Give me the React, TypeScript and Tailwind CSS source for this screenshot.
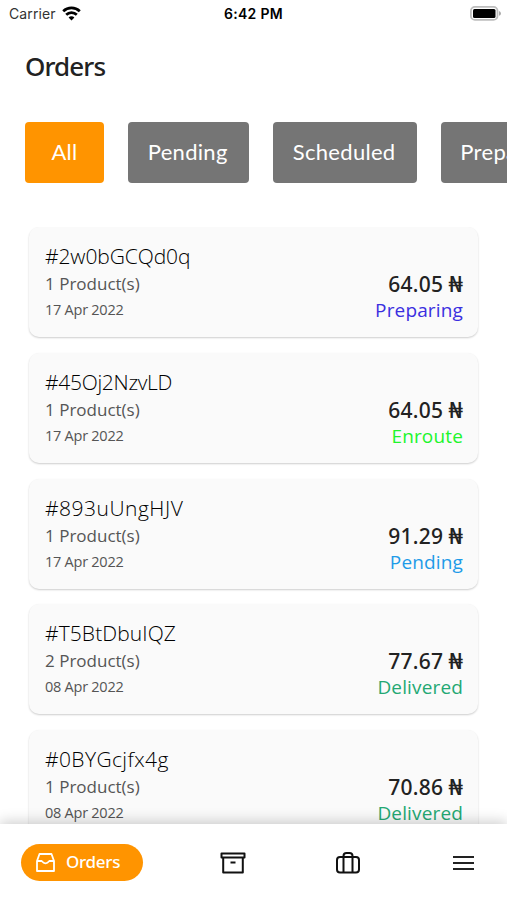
import { useState } from "react";

const filters = [
  { name: "All", width: "w-[79px]" },
  { name: "Pending", width: "w-[121.4px]" },
  { name: "Scheduled", width: "w-[143.5px]" },
  { name: "Preparing", width: "w-[136px]" },
];

const orders = [
  { id: "2w0bGCQd0q", tracking: "tracking-[-0.1px]", products: 1, date: "17 Apr 2022", total: "64.05", status: "Preparing", color: "text-[#3a2fe0]" },
  { id: "45Oj2NzvLD", tracking: "tracking-[-0.3px]", products: 1, date: "17 Apr 2022", total: "64.05", status: "Enroute", color: "text-[#20f52c]" },
  { id: "893uUngHJV", tracking: "tracking-[0.5px]", products: 1, date: "17 Apr 2022", total: "91.29", status: "Pending", color: "text-[#1e9be8]" },
  { id: "T5BtDbuIQZ", tracking: "tracking-[0.1px]", products: 2, date: "08 Apr 2022", total: "77.67", status: "Delivered", color: "text-[#23a873]" },
  { id: "0BYGcjfx4g", tracking: "tracking-[0.4px]", products: 1, date: "08 Apr 2022", total: "70.86", status: "Delivered", color: "text-[#23a873]" },
];

function StatusBar() {
  return (
    <div className="grid h-[27px] shrink-0 grid-cols-3 items-center pl-[9px] pr-[6px] font-['Inter',sans-serif] text-[14px] text-black">
      <div className="flex items-center gap-[6px]">
        <span className="tracking-[0.1px] text-[#333]">Carrier</span>
        <svg width="19" height="15" viewBox="0 0 19 15" fill="none" stroke="black" strokeWidth="2.7">
          <path d="M1.2 5.3a12 12 0 0 1 16.6 0" />
          <path d="M4.2 8.8a7.5 7.5 0 0 1 10.6 0" />
          <path d="M9.5 14.4 6.6 11.4a4 4 0 0 1 5.8 0Z" fill="black" stroke="none" />
        </svg>
      </div>
      <span className="-ml-[3px] text-center font-semibold tracking-[0.3px]">6:42 PM</span>
      <svg className="justify-self-end" width="31" height="15" viewBox="0 0 31 15">
        <rect x="0.9" y="0.9" width="26.6" height="13" rx="4" fill="white" stroke="#bdbdbd" strokeWidth="1.8" />
        <rect x="3" y="3" width="22.5" height="9" rx="1.5" fill="black" />
        <path d="M29 5q2 .7 2 2.4t-2 2.4Z" fill="#aaa" />
      </svg>
    </div>
  );
}

function OrderCard({ order }: { order: (typeof orders)[number] }) {
  return (
    <div className="flex h-[110px] shrink-0 justify-between rounded-[10px] bg-[#fafafa] px-4 shadow-[0_1px_2px_rgba(0,0,0,0.2)]">
      <div className="flex flex-col pt-[15px]">
        <h2 className={`text-[21px] leading-7 font-light text-black ${order.tracking}`}>#{order.id}</h2>
        <p className="text-[17px] leading-7 text-[#555]">{order.products} Product(s)</p>
        <p className="text-[14.5px] leading-6 tracking-[-0.25px] text-[#555]">{order.date}</p>
      </div>
      <div className="-mr-px flex flex-col items-end pt-11">
        <p className="font-['Noto_Sans',sans-serif] text-[21px] leading-[27px] font-medium tracking-[0.2px] text-[#222]">
          {order.total} <span className="ml-[2px] inline-block origin-right scale-x-120">₦</span>
        </p>
        <p className={`text-[19px] leading-[25px] tracking-[0.15px] ${order.color}`}>{order.status}</p>
      </div>
    </div>
  );
}

export default function App() {
  const [filter, setFilter] = useState("All");

  return (
    <main className="flex h-[900px] w-[507px] flex-col overflow-hidden bg-white font-['Open_Sans','Noto_Sans',sans-serif]">
      <StatusBar />

      <h1 className="mt-[19px] ml-[25px] font-['Noto_Sans',sans-serif] text-[26px] leading-10 font-medium tracking-[-0.9px] text-[#222]">Orders</h1>

      {/* Filters */}
      <div className="mt-9 ml-[25px] flex shrink-0 gap-6 overflow-hidden font-['Lato',sans-serif]">
        {filters.map(({ name, width }) => (
          <button
            key={name}
            onClick={() => setFilter(name)}
            className={`h-[61px] shrink-0 rounded-[4px] pb-[3px] text-[22px] tracking-[0.3px] text-white ${width} ${filter === name ? "bg-[#ff9400]" : "bg-[#757575] pr-[2px]"}`}
          >
            {name}
          </button>
        ))}
      </div>

      {/* Order list */}
      <div className="mt-11 flex min-h-0 flex-1 flex-col gap-[15.8px] overflow-hidden pr-[29px] pl-[29px]">
        {orders.map((order) => (
          <OrderCard key={order.id} order={order} />
        ))}
      </div>

      {/* Bottom navigation */}
      <nav className="relative flex h-[76px] shrink-0 items-center bg-white pl-[21px] shadow-[0_-3px_12px_rgba(0,0,0,0.18)]">
        <button className="flex h-[37px] w-[122px] items-center gap-[11px] rounded-full bg-[#ff9400] pl-[15px] font-['Noto_Sans',sans-serif] text-[17px] font-medium text-white">
          <svg width="19" height="19" viewBox="0 0 19 19" fill="none" stroke="white" strokeWidth="1.8" strokeLinejoin="round">
            <path d="M1 8 3.5 1h12L18 8v10H1ZM1 8h4.7q3.8 4.6 7.6 0H18" />
          </svg>
          <span className="tracking-[-0.3px]">Orders</span>
        </button>
        <svg className="mt-[2px] ml-[77px]" width="26" height="22" viewBox="0 0 26 22" fill="none" stroke="#111" strokeWidth="2" strokeLinejoin="round">
          <path d="M1.5 1.5h23v4h-23ZM3.2 6v14.5h19.6V6M10.5 10.5h5" />
        </svg>
        <svg className="mt-px ml-[90px]" width="24" height="22" viewBox="0 0 24 22" fill="none" stroke="#111" strokeWidth="2">
          <rect x="1" y="5" width="22" height="15.5" rx="3" />
          <path d="M7.5 20.5V4q0-3 3-3h3q3 0 3 3v16.5" />
        </svg>
        <svg className="mt-[2px] ml-[93px]" width="21" height="16" viewBox="0 0 21 16" stroke="#222" strokeWidth="2.2">
          <path d="M0 2h21M0 8h21M0 14h21" />
        </svg>
      </nav>
    </main>
  );
}
